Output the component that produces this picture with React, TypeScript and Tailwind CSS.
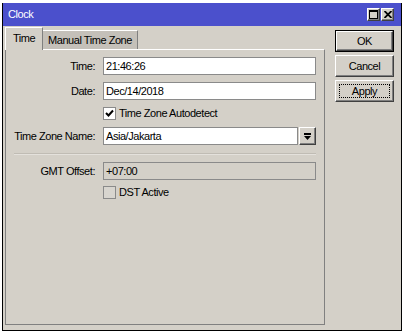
import React from "react";

const raised =
  "border border-t-white border-l-white border-r-[#404040] border-b-[#404040] shadow-[inset_-1px_-1px_0_#808080] bg-[#d4d0c8]";

function Field({
  label,
  value,
  disabled,
  children,
}: {
  label: string;
  value: string;
  disabled?: boolean;
  children?: React.ReactNode;
}) {
  return (
    <div className="flex items-center h-[18px]">
      <div className="w-[90px] text-right pr-[1px]">{label}</div>
      <div className="ml-[7px] flex gap-px">
        <div
          className={`h-[18px] ${children ? "w-[195px]" : "w-[213px]"} border border-[#8a8a8a] pl-[2px] flex items-center ${
            disabled ? "bg-[#d4d0c8]" : "bg-white"
          }`}
        >
          {value}
        </div>
        {children}
      </div>
    </div>
  );
}

function Check({ label, checked, disabled }: { label: string; checked?: boolean; disabled?: boolean }) {
  return (
    <div className="flex items-center h-[13px] pl-[97px]">
      <div
        className={`w-[13px] h-[13px] border border-[#8a8a8a] flex items-center justify-center ${
          disabled ? "bg-[#d8d5cf]" : "bg-white"
        }`}
      >
        {checked ? (
          <svg width="9" height="9" viewBox="0 0 9 9">
            <path d="M1 4 L3.5 6.5 L8 1.5" stroke="black" strokeWidth="2" fill="none" />
          </svg>
        ) : null}
      </div>
      <span className="ml-[3px]">{label}</span>
    </div>
  );
}

function WinButton({ label, isDefault, focused }: { label: string; isDefault?: boolean; focused?: boolean }) {
  const inner = (
    <div className={`${raised} w-full h-full flex items-center justify-center relative`}>
      {focused ? (
        <div className="absolute inset-[3px] border border-dotted border-black" />
      ) : null}
      <span>{label}</span>
    </div>
  );
  return isDefault ? (
    <div className="w-[59px] h-[22px] border border-black">{inner}</div>
  ) : (
    <div className="w-[59px] h-[22px]">{inner}</div>
  );
}

export default function App() {
  return (
    <div className="w-[405px] h-[332px] bg-white pl-[2px] pt-[3px] font-['Liberation_Sans',Arial,sans-serif] text-[11px] tracking-[-0.45px] text-black leading-none">
      <div className="w-[400px] h-[328px] flex flex-col bg-[#d4d0c8] border-l border-r border-b border-black">
        {/* title bar */}
        <div className="h-[23px] bg-[#4b50cc] flex items-center pl-[5px] pr-[7px]">
          <span className="text-white flex-1">Clock</span>
          <div className="flex gap-px">
            <div className={`${raised} w-[13px] h-[13px] flex items-center justify-center`}>
              <svg width="9" height="9" viewBox="0 0 9 9">
                <rect x="0.5" y="0.5" width="8" height="8" fill="none" stroke="black" />
                <rect x="0" y="0" width="9" height="2" fill="black" />
              </svg>
            </div>
            <div className={`${raised} w-[13px] h-[13px] flex items-center justify-center`}>
              <svg width="8" height="7" viewBox="0 0 8 7">
                <path d="M0.5 0 L7.5 7 M7.5 0 L0.5 7" stroke="black" strokeWidth="1.8" />
              </svg>
            </div>
          </div>
        </div>

        <div className="flex-1 flex pl-[2px]">
          {/* tabs + panel */}
          <div className="w-[320px] flex flex-col pt-px pb-[5px]">
            <div className="flex items-end h-[22px]">
              <div className="relative z-10 -mb-px h-[23px] w-[38px] bg-[#d4d0c8] border-l border-t border-white border-r border-r-[#808080] flex items-center justify-center pb-[2px]">
                Time
              </div>
              <div className="h-[19px] w-[95px] bg-[#c4c0b9] border-t border-white border-r border-r-[#808080] flex items-center justify-center">
                Manual Time Zone
              </div>
            </div>
            <div className="flex-1 border-t border-t-white border-l border-r border-b border-[#808080] pt-[7px] flex flex-col">
              <Field label="Time:" value="21:46:26" />
              <div className="h-[7px]" />
              <Field label="Date:" value="Dec/14/2018" />
              <div className="h-[7px]" />
              <Check label="Time Zone Autodetect" checked />
              <div className="h-[7px]" />
              <Field label="Time Zone Name:" value="Asia/Jakarta">
                <div className={`${raised} w-[17px] h-[18px] flex items-center justify-center`}>
                  <svg width="7" height="7" viewBox="0 0 7 7">
                    <rect x="0" y="0" width="7" height="2" fill="black" />
                    <path d="M0 3 L7 3 L3.5 7 Z" fill="black" />
                  </svg>
                </div>
              </Field>
              <div className="ml-[8px] w-[302px] mt-[8px] h-[2px] border-t border-[#c0bcb4] border-b border-b-[#e4e1dc]" />
              <div className="h-[7px]" />
              <Field label="GMT Offset:" value="+07:00" disabled />
              <div className="h-[6px]" />
              <Check label="DST Active" disabled />
            </div>
          </div>

          {/* buttons */}
          <div className="ml-[10px] pt-[4px] flex flex-col gap-[3px]">
            <WinButton label="OK" isDefault />
            <WinButton label="Cancel" />
            <WinButton label="Apply" focused />
          </div>
        </div>
      </div>
    </div>
  );
}
